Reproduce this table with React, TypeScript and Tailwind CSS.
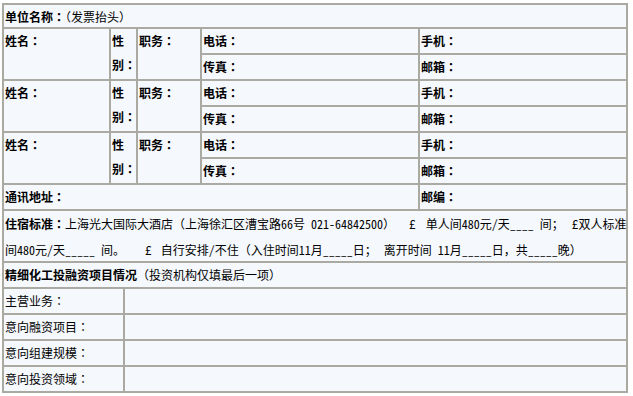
import React from "react";

const cell =
  "border border-[#aaaaa2] bg-[#f5f8fd] pl-px leading-[24px] overflow-hidden whitespace-nowrap text-black";

function K() {
  return (
    <span className="[font-family:'Noto_Sans_Mono_CJK_TC','Noto_Sans_CJK_TC',sans-serif]">：</span>
  );
}

function Sp({ w }: { w: string }) {
  return <span className={`inline-block ${w}`} />;
}

function Person() {
  return (
    <>
      <div className={`${cell} row-span-2 font-bold`}>
        姓名<K />
      </div>
      <div className={`${cell} col-span-2 row-span-2 font-bold`}>
        <div>性</div>
        <div>
          别<K />
        </div>
      </div>
      <div className={`${cell} row-span-2 font-bold`}>
        职务<K />
      </div>
      <div className={`${cell} font-bold`}>
        电话<K />
      </div>
      <div className={`${cell} font-bold`}>
        手机<K />
      </div>
      <div className={`${cell} font-bold`}>
        传真<K />
      </div>
      <div className={`${cell} font-bold`}>
        邮箱<K />
      </div>
    </>
  );
}

export default function App() {
  return (
    <div className="w-[633px] h-[396px] bg-white pt-[3px] pl-[2px] text-[12px] [font-family:'Noto_Sans_Mono_CJK_SC','Noto_Sans_CJK_SC',sans-serif]">
      <div className="grid w-[626px] grid-cols-[107px_14px_13px_64px_218px_208px] grid-rows-[24px_repeat(7,26px)_52px_repeat(5,26px)] border border-[#aaaaa2]">
        <div className={`${cell} col-span-6 leading-[22px]`}>
          <span className="font-bold">
            单位名称<K />
          </span>
          （发票抬头）
        </div>
        <Person />
        <Person />
        <Person />
        <div className={`${cell} col-span-5 font-bold`}>
          通讯地址<K />
        </div>
        <div className={`${cell} font-bold`}>
          邮编<K />
        </div>
        <div className={`${cell} col-span-6 leading-[26px] whitespace-pre`}>
          <div>
            <span className="font-bold">
              住宿标准<K />
            </span>
            上海光大国际大酒店（上海徐汇区漕宝路66号 021-64842500）
            <Sp w="w-[14px]" />£
            <Sp w="w-[10px]" />单人间480元/天____ 间；
            <Sp w="w-[8px]" />£双人标准
          </div>
          <div>
            间480元/天_____ 间。
            <Sp w="w-[20px]" />£
            <Sp w="w-[9px]" />自行安排/不住（入住时间11月_____日；
            <Sp w="w-[7px]" />离开时间 11月_____日，共_____晚）
          </div>
        </div>
        <div className={`${cell} col-span-6`}>
          <span className="font-bold">精细化工投融资项目情况</span>（投资机构仅填最后一项）
        </div>
        <div className={`${cell} col-span-2`}>
          主营业务<K />
        </div>
        <div className={`${cell} col-span-4`} />
        <div className={`${cell} col-span-2`}>
          意向融资项目<K />
        </div>
        <div className={`${cell} col-span-4`} />
        <div className={`${cell} col-span-2`}>
          意向组建规模<K />
        </div>
        <div className={`${cell} col-span-4`} />
        <div className={`${cell} col-span-2`}>
          意向投资领域<K />
        </div>
        <div className={`${cell} col-span-4`} />
      </div>
    </div>
  );
}
